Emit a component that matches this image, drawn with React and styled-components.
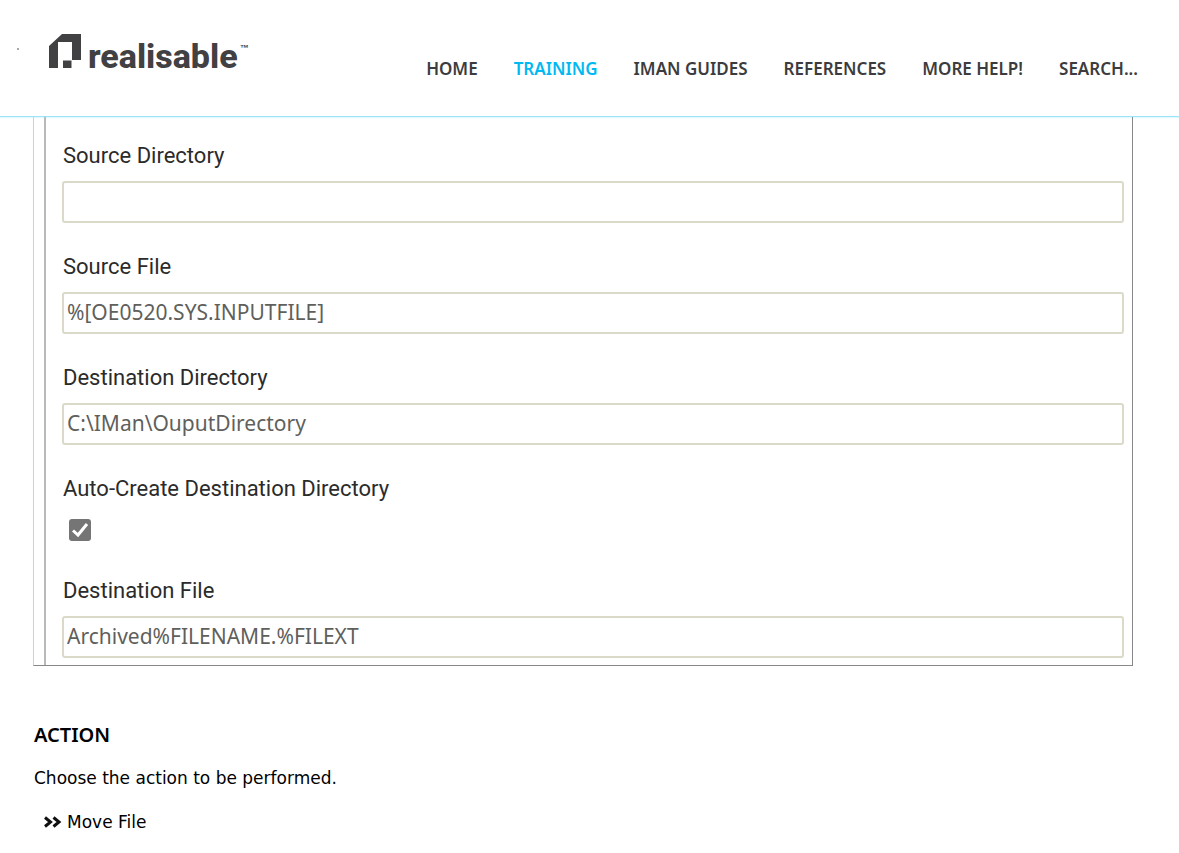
import styled, { createGlobalStyle } from 'styled-components'

const GlobalStyle = createGlobalStyle`
    * {
        box-sizing: border-box;
    }
    body {
        margin: 0;
        background-color: #fff;
        color: #000;
        font-family: "DejaVu Sans", Verdana, sans-serif;
        font-size: 17px;
    }
`

const Header = styled.header`
    display: flex;
    justify-content: space-between;
    align-items: flex-start;
    height: 117px;
    padding: 34px 41px 0 16px;
    border-bottom: 1px solid #9be4fb;
    box-shadow: 0 1px 1px #e4f8fe;
`

const Brand = styled.a`
    display: flex;
    align-items: flex-start;
    color: #414042;
    text-decoration: none;
`

const Dot = styled.span`
    width: 2px;
    height: 2px;
    margin: 14px 30px 0 1px;
    background-color: #aaa;
`

const BrandName = styled.span`
    margin-left: 6px;
    font-family: Roboto, sans-serif;
    font-size: 34px;
    font-weight: 800;
    line-height: 44px;
`

const Trademark = styled.span`
    margin: 9px 0 0 2px;
    font-family: "Liberation Sans", sans-serif;
    font-size: 9px;
    font-weight: 700;
`

const Nav = styled.nav`
    display: flex;
    gap: 36px;
    padding-top: 23px;
`

const NavLink = styled.a`
    color: ${({ $active }) => ($active ? '#00b9f2' : '#3c3c3e')};
    font-family: "Noto Sans", sans-serif;
    font-size: 17px;
    font-weight: 600;
    line-height: 24px;
    text-decoration: none;
    text-transform: uppercase;
    white-space: nowrap;
`

const Main = styled.main`
    padding: 0 46px 20px 33px;
`

const Frame = styled.section`
    padding-left: 10px;
    border: 1px solid #888;
    border-top: none;
    border-left-color: #d0d0d0;
`

const Form = styled.form`
    display: flex;
    flex-direction: column;
    gap: 31px;
    padding: 26px 8px 7px 16px;
    border-left: 2px solid #b9b9b9;
`

const Field = styled.div`
    display: flex;
    flex-direction: column;
    gap: 12px;
`

const Label = styled.label`
    padding-left: 1px;
    color: #2b2b2b;
    font-family: Roboto, sans-serif;
    font-size: 22px;
    line-height: 26px;
`

const TextInput = styled.input`
    width: 100%;
    height: 42px;
    padding: 0 3px 2px;
    border: 2px solid #dbdac9;
    border-radius: 3px;
    background-color: #fff;
    color: #5f5f5c;
    font-family: "Noto Sans", sans-serif;
    font-size: 21px;
    outline: none;
`

const CheckWrap = styled.div`
    position: relative;
    width: 22px;
    height: 22px;
    margin: 5px 0 6px 7px;

    svg {
        position: absolute;
        inset: 0;
        pointer-events: none;
    }
`

const Checkbox = styled.input`
    appearance: none;
    display: block;
    width: 22px;
    height: 22px;
    margin: 0;
    border-radius: 3px;
    background-color: #757575;
`

const Content = styled.section`
    padding: 55px 0 0 1px;
`

const Title = styled.h2`
    margin: 0;
    font-family: "Noto Sans", sans-serif;
    font-size: 20px;
    font-weight: 600;
    line-height: 28px;
`

const Text = styled.p`
    margin: 17px 0 0;
    line-height: 24px;
`

const List = styled.ul`
    margin: 20px 0 0;
    padding: 0 0 0 10px;
    list-style: none;
`

const Item = styled.li`
    display: flex;
    align-items: center;
    gap: 5px;
    line-height: 24px;
`

const links = ['Home', 'Training', 'IMan Guides', 'References', 'More Help!', 'Search...']

const LogoMark = () => (
    <svg width="33" height="34" viewBox="0 0 33 34" aria-hidden="true">
        <path fill="#414042" d="M13 0H32V26H23V8H9V34H0V12Z" />
        <path fill="#414042" d="M14 26.5H22.5V34H14Z" />
    </svg>
)

const Arrows = () => (
    <svg width="18" height="12" viewBox="0 0 18 12" fill="none" stroke="#111" strokeWidth="3" aria-hidden="true">
        <path d="M1 1.5L6.5 6L1 10.5M9.5 1.5L15 6L9.5 10.5" />
    </svg>
)

const TextField = ({ id, label, value = '' }) => (
    <Field>
        <Label htmlFor={id}>{label}</Label>
        <TextInput id={id} type='text' defaultValue={value} spellCheck={false} />
    </Field>
)

const App = () => {
    return (
        <>
            <GlobalStyle />
            <Header>
                <Brand href='#'>
                    <Dot />
                    <LogoMark />
                    <BrandName>realisable</BrandName>
                    <Trademark>™</Trademark>
                </Brand>
                <Nav>
                    {links.map((link) => (
                        <NavLink key={link} href='#' $active={link === 'Training'}>{link}</NavLink>
                    ))}
                </Nav>
            </Header>

            <Main>
                <Frame>
                    <Form>
                        <TextField id='sourceDir' label='Source Directory' />
                        <TextField id='sourceFile' label='Source File' value='%[OE0520.SYS.INPUTFILE]' />
                        <TextField id='destDir' label='Destination Directory' value='C:\IMan\OuputDirectory' />
                        <Field>
                            <Label htmlFor='autoCreate'>Auto-Create Destination Directory</Label>
                            <CheckWrap>
                                <Checkbox id='autoCreate' type='checkbox' defaultChecked />
                                <svg width="22" height="22" viewBox="0 0 22 22" fill="none" stroke="#fff" strokeWidth="3" aria-hidden="true">
                                    <path d="M4 11.5L9 16L18 5" />
                                </svg>
                            </CheckWrap>
                        </Field>
                        <TextField id='destFile' label='Destination File' value='Archived%FILENAME.%FILEXT' />
                    </Form>
                </Frame>

                <Content>
                    <Title>ACTION</Title>
                    <Text>Choose the action to be performed.</Text>
                    <List>
                        <Item><Arrows />Move File</Item>
                    </List>
                </Content>
            </Main>
        </>
    )
}

export default App
